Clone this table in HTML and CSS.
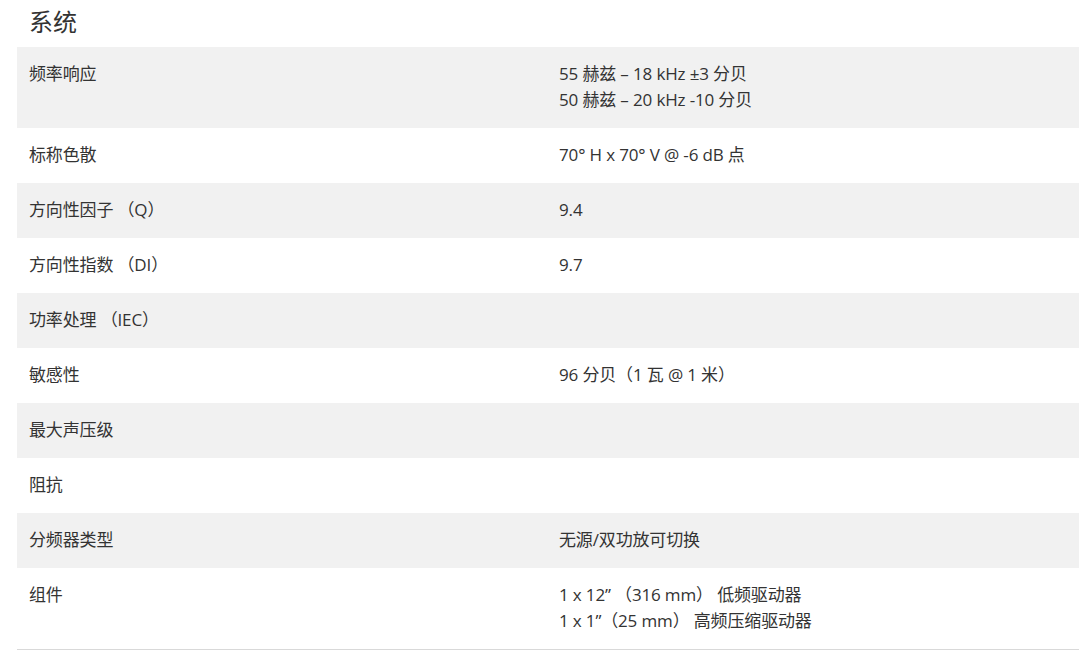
FILE: index.html
```html
<!DOCTYPE html>
<html lang="zh-CN">
<head>
<meta charset="utf-8">
<link rel="stylesheet" href="styles.css">
</head>
<body>
<div class="page">
  <h2 class="title">系统</h2>
  <div class="specs">
    <div class="row shade"><div class="cell">频率响应</div><div class="cell">55 赫兹 – 18 kHz ±3 分贝<br>50 赫兹 – 20 kHz -10 分贝</div></div>
    <div class="row"><div class="cell">标称色散</div><div class="cell">70° H x 70° V @ -6 dB 点</div></div>
    <div class="row shade"><div class="cell">方向性因子 （Q）</div><div class="cell">9.4</div></div>
    <div class="row"><div class="cell">方向性指数 （DI）</div><div class="cell">9.7</div></div>
    <div class="row shade"><div class="cell">功率处理 （IEC）</div><div class="cell"></div></div>
    <div class="row"><div class="cell">敏感性</div><div class="cell">96 分贝（1 瓦 @ 1 米）</div></div>
    <div class="row shade"><div class="cell">最大声压级</div><div class="cell"></div></div>
    <div class="row"><div class="cell">阻抗</div><div class="cell"></div></div>
    <div class="row shade"><div class="cell">分频器类型</div><div class="cell">无源/双功放可切换</div></div>
    <div class="row last"><div class="cell">组件</div><div class="cell">1 x 12” （316 mm） 低频驱动器<br>1 x 1”（25 mm） 高频压缩驱动器</div></div>
  </div>
</div>
</body>
</html>
```
FILE: styles.css
```css
html, body {
  margin: 0;
  padding: 0;
  background: #ffffff;
}
body {
  font-family: "Open Sans", "Noto Sans CJK SC", sans-serif;
  color: #333333;
  text-spacing-trim: space-all;
}
.page {
  margin: 0 11px 0 17px;
}
.title {
  margin: 0;
  padding: 4px 12px 0;
  height: 43px;
  font-size: 24px;
  font-weight: 400;
  line-height: 36px;
  color: #333333;
}
.specs {
  display: flex;
  flex-direction: column;
}
.row {
  display: grid;
  grid-template-columns: 1fr 1fr;
}
.row.shade {
  background: #f1f1f1;
}
.row.last {
  border-bottom: 1px solid #d9d9d9;
}
.cell {
  padding: 14px 12px 15px;
  font-size: 17px;
  letter-spacing: -0.15px;
  line-height: 26px;
  min-height: 26px;
}
.cell + .cell {
  padding-left: 11px;
}
```
